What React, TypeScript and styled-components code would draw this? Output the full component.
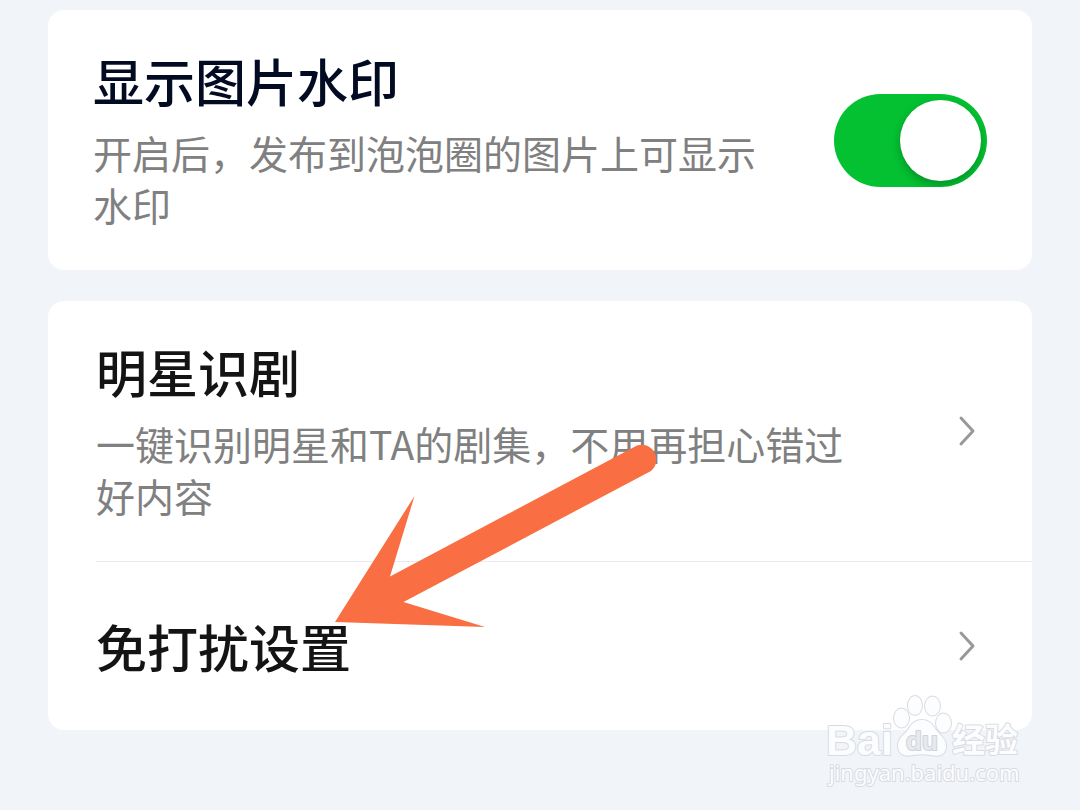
import React, { useState } from "react";
import styled, { createGlobalStyle } from "styled-components";

const GlobalStyle = createGlobalStyle`
  * {
    box-sizing: border-box;
  }
  body {
    margin: 0;
    background: #f1f5fa;
    font-family: "Noto Sans CJK SC", "Noto Sans", sans-serif;
  }
`;

const Page = styled.main`
  position: relative;
  display: flex;
  flex-direction: column;
  gap: 31px;
  min-height: 100vh;
  padding: 10px 48px 80px;
  background: #f1f5fa;
`;

const Card = styled.section`
  border-radius: 16px;
  background: #ffffff;
  overflow: hidden;
`;

const SwitchRow = styled.label`
  display: flex;
  align-items: center;
  gap: 44px;
  padding: 40px 45px;
  cursor: pointer;
`;

const LinkRow = styled.button<{ $single?: boolean }>`
  display: flex;
  align-items: center;
  gap: 80px;
  width: 100%;
  padding: ${(p) => (p.$single ? "54px" : "40px")} 56px ${(p) => (p.$single ? "54px" : "40px")} 48px;
  border: 0;
  background: transparent;
  font: inherit;
  text-align: left;
  cursor: pointer;
`;

const Divider = styled.hr`
  height: 1px;
  margin: 0 0 0 48px;
  border: 0;
  background: #ebebed;
`;

const TextBlock = styled.span`
  display: flex;
  flex: 1;
  flex-direction: column;
  gap: 16px;
  min-width: 0;
`;

const Title = styled.span<{ $tone?: string }>`
  color: ${(p) => p.$tone ?? "#141414"};
  font-size: 51px;
  font-weight: 500;
  line-height: 60px;
`;

const Description = styled.span`
  color: #808080;
  font-size: 39px;
  line-height: 52px;
`;

const Switch = styled.input`
  flex: none;
  width: 153px;
  height: 93px;
  margin: 0;
  padding: 6px;
  border-radius: 47px;
  background: #d5d8dc;
  appearance: none;
  overflow: hidden;
  cursor: pointer;

  &::before {
    content: "";
    display: block;
    width: 81px;
    height: 81px;
    border-radius: 50%;
    background: #ffffff;
    box-shadow: 0 4px 10px rgba(0, 0, 0, 0.25);
  }

  &:checked {
    background: #04c132;
  }

  &:checked::before {
    margin-left: 60px;
  }
`;

const ChevronIcon = styled.svg`
  flex: none;
  width: 20px;
  height: 32px;
`;

const Arrow = styled.svg`
  position: absolute;
  top: 440px;
  left: 332px;
  width: 332px;
  height: 192px;
  pointer-events: none;
`;

const Watermark = styled.svg`
  position: absolute;
  top: 690px;
  right: 52px;
  width: 208px;
  height: 104px;
  pointer-events: none;
`;

function Chevron() {
  return (
    <ChevronIcon viewBox="0 0 20 32" aria-hidden="true">
      <path
        d="M5 3 17 16 5 29"
        fill="none"
        stroke="#999999"
        strokeWidth="3"
        strokeLinecap="round"
        strokeLinejoin="round"
      />
    </ChevronIcon>
  );
}

function BaiduMark() {
  return (
    <Watermark viewBox="0 0 208 104" role="img" aria-label="Baidu 经验">
      <g
        fill="#fcfdff"
        stroke="#d9dbe0"
        strokeWidth="2"
        strokeLinejoin="round"
        paintOrder="stroke"
      >
        <ellipse cx="81.5" cy="28" rx="7.5" ry="9.5" />
        <ellipse cx="95" cy="15.5" rx="7" ry="9.5" />
        <ellipse cx="112.5" cy="16" rx="7.5" ry="9.5" />
        <ellipse cx="123.5" cy="33" rx="7.5" ry="9.5" />
        <path d="M102 30C96 30 92 33 89 38 85 45 77 48 78 57 79 65 86 67 93 65 99 64 105 64 111 65 119 67 126 65 126 56 126 48 118 44 114 37 111 32 107 30 102 30Z" />
        <text x="6" y="65" fontFamily="Liberation Sans, sans-serif" fontSize="43" fontWeight="700">
          Bai
        </text>
        <text
          x="86"
          y="60"
          fontFamily="Liberation Sans, sans-serif"
          fontSize="26"
          fontWeight="700"
          fill="#e6e9ee"
          stroke="#cfd2d8"
        >
          du
        </text>
        <text x="132" y="62" fontFamily="Noto Sans CJK SC, sans-serif" fontSize="33" fontWeight="700">
          经验
        </text>
        <text x="9" y="91" fontFamily="Noto Sans, sans-serif" fontSize="22">
          jingyan.baidu.com
        </text>
      </g>
    </Watermark>
  );
}

export default function App() {
  const [watermarkOn, setWatermarkOn] = useState(true);

  return (
    <>
      <GlobalStyle />
      <Page>
        <Card>
          <SwitchRow>
            <TextBlock>
              <Title $tone="#020b22">显示图片水印</Title>
              <Description>开启后，发布到泡泡圈的图片上可显示水印</Description>
            </TextBlock>
            <Switch
              type="checkbox"
              role="switch"
              checked={watermarkOn}
              onChange={(e) => setWatermarkOn(e.target.checked)}
            />
          </SwitchRow>
        </Card>
        <Card>
          <LinkRow type="button">
            <TextBlock>
              <Title>明星识剧</Title>
              <Description>一键识别明星和TA的剧集，不用再担心错过好内容</Description>
            </TextBlock>
            <Chevron />
          </LinkRow>
          <Divider />
          <LinkRow type="button" $single>
            <TextBlock>
              <Title>免打扰设置</Title>
            </TextBlock>
            <Chevron />
          </LinkRow>
        </Card>
        <Arrow viewBox="332 440 332 192" aria-hidden="true">
          <path
            d="M335 622 414.5 496 390 576.5 637 445.500A14.8 14.8 0 0 1 651 471L403.500 602 485 627Z"
            fill="#f96f43"
          />
        </Arrow>
        <BaiduMark />
      </Page>
    </>
  );
}
